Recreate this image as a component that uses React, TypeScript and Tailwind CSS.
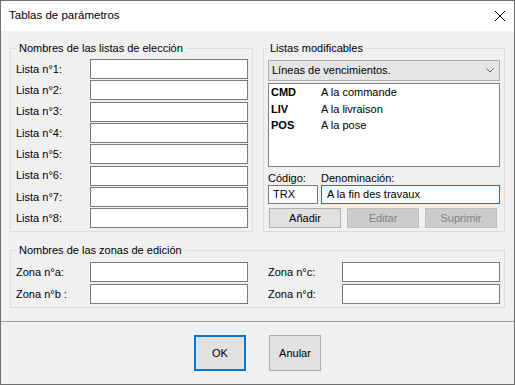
const listas = ['Lista n°1:', 'Lista n°2:', 'Lista n°3:', 'Lista n°4:', 'Lista n°5:', 'Lista n°6:', 'Lista n°7:', 'Lista n°8:'];

const items = [
  { code: 'CMD', label: 'A la commande' },
  { code: 'LIV', label: 'A la livraison' },
  { code: 'POS', label: 'A la pose' },
];

function TextBox({ className = '' }: { className?: string }) {
  return <div className={`h-[20px] w-[158px] border border-[#7a7a7a] bg-white ${className}`} />;
}

export default function App() {
  return (
    <div className="w-[515px] h-[385px] border border-[#707070] bg-[#f0f0f0] flex flex-col font-['Liberation_Sans',Arial,sans-serif] text-[11px] text-black">
      {/* title bar */}
      <div className="h-[30px] shrink-0 bg-white flex items-center justify-between">
        <span className="ml-[8px] text-[11.5px]">Tablas de parámetros</span>
        <svg width="10" height="10" viewBox="0 0 10 10" className="mr-[9px]">
          <path d="M0 0L10 10M10 0L0 10" stroke="#000" strokeWidth="1" fill="none" />
        </svg>
      </div>

      <div className="px-[9px] pt-[10px]">
        <div className="flex gap-[10px]">
          <fieldset className="w-[243px] border border-[#dcdcdc]">
            <legend className="ml-[5px] px-[3px] leading-[14px]">Nombres de las listas de elección</legend>
            <div className="pl-[5px] pr-[4px] pt-[4px] pb-[3px] flex flex-col gap-[1.33px]">
              {listas.map((l) => (
                <div key={l} className="flex items-center">
                  <span className="w-[74px]">{l}</span>
                  <TextBox />
                </div>
              ))}
            </div>
          </fieldset>

          <fieldset className="w-[242px] border border-[#dcdcdc]">
            <legend className="ml-[4px] px-[2px] leading-[14px]">Listas modificables</legend>
            <div className="px-[4px] pt-[5px] flex flex-col">
              <div className="h-[21px] border border-[#adadad] bg-[#e5e5e5] flex items-center justify-between pl-[3px] pr-[5px]">
                <span>Líneas de vencimientos.</span>
                <svg width="8" height="5" viewBox="0 0 8 5">
                  <path d="M0.5 0.5L4 4L7.5 0.5" stroke="#606060" strokeWidth="1" fill="none" />
                </svg>
              </div>
              <div className="mt-[2px] h-[84px] border border-[#828282] bg-white pl-[2px]">
                {items.map((it) => (
                  <div key={it.code} className="flex leading-[16.5px]">
                    <span className="w-[50px] font-bold">{it.code}</span>
                    <span>{it.label}</span>
                  </div>
                ))}
              </div>
              <div className="flex gap-[3px] pt-[4px] leading-[14px]">
                <span className="w-[50px]">Código:</span>
                <span>Denominación:</span>
              </div>
              <div className="flex gap-[3px]">
                <div className="w-[50px] h-[19px] border border-[#7a7a7a] bg-white flex items-center pl-[4px]">TRX</div>
                <div className="flex-1 h-[19px] border border-[#0078d7] bg-white flex items-center pl-[5px]">A la fin des travaux</div>
              </div>
              <div className="mt-[4px] ml-[1px] flex gap-[6px]">
                <button className="w-[72px] h-[20px] border border-[#adadad] bg-[#e1e1e1]">Añadir</button>
                <button className="w-[72px] h-[20px] border border-[#bfbfbf] bg-[#cccccc] text-[#838383]">Editar</button>
                <button className="w-[72px] h-[20px] border border-[#bfbfbf] bg-[#cccccc] text-[#838383]">Suprimir</button>
              </div>
            </div>
          </fieldset>
        </div>

        <fieldset className="mt-[11px] border border-[#dcdcdc]">
          <legend className="ml-[5px] px-[3px] leading-[14px]">Nombres de las zonas de edición</legend>
          <div className="pl-[5px] pt-[5px] pb-[3px] grid grid-cols-[232px_232px] gap-x-[20px] gap-y-[2px]">
            <div className="flex items-center">
              <span className="w-[74px]">Zona n°a:</span>
              <TextBox />
            </div>
            <div className="flex items-center">
              <span className="w-[74px]">Zona n°c:</span>
              <TextBox />
            </div>
            <div className="flex items-center">
              <span className="w-[74px]">Zona n°b :</span>
              <TextBox />
            </div>
            <div className="flex items-center">
              <span className="w-[74px]">Zona n°d:</span>
              <TextBox />
            </div>
          </div>
        </fieldset>
      </div>

      <div className="mt-[13px] h-px bg-[#a0a0a0]" />

      <div className="mt-[13px] flex justify-center gap-[23px]">
        <button className="w-[52px] h-[36px] border-2 border-[#0078d7] bg-[#e1e1e1]">OK</button>
        <button className="w-[52px] h-[36px] border border-[#adadad] bg-[#e1e1e1]">Anular</button>
      </div>
    </div>
  );
}
